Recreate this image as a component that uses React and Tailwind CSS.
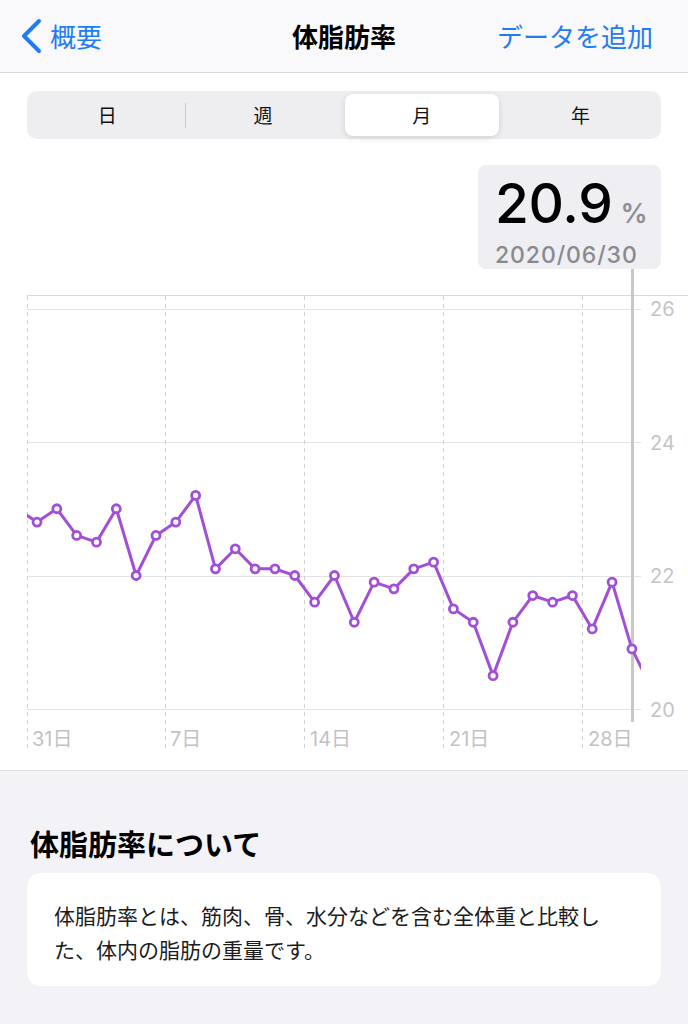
import React from 'react';

const JP = { fontFamily: '"Noto Sans CJK JP", "Noto Sans", sans-serif' };
const NUM = { fontFamily: 'Inter, "Noto Sans CJK JP", sans-serif' };

const PURPLE = '#a24fd8';

// 5/31 .. 6/30
const values = [
  22.8, 23.0, 22.6, 22.5, 23.0, 22.0, 22.6, 22.8, 23.2, 22.1, 22.4, 22.1, 22.1, 22.0, 21.6, 22.0,
  21.3, 21.9, 21.8, 22.1, 22.2, 21.5, 21.3, 20.5, 21.3, 21.7, 21.6, 21.7, 21.2, 21.9, 20.9,
];

const xAt = i => 37 + i * 19.83;
const yAt = v => 709 - (v - 20) * 66.75;

const weekLines = [27, 165, 304, 443, 582];
const dayLabels = [
  { x: 32, t: '31日' },
  { x: 170, t: '7日' },
  { x: 310, t: '14日' },
  { x: 449, t: '21日' },
  { x: 588, t: '28日' },
];

function Segments() {
  const items = ['日', '週', '月', '年'];
  return (
    <div className="mx-[27px] mt-[18px] flex h-[48px] items-stretch rounded-[10px] bg-[#eeeef0] p-[3px]">
      {items.map((t, i) => (
        <React.Fragment key={t}>
          {i > 0 && (
            <div className={`w-px self-center h-[25px] ${i === 1 ? 'bg-[#c9c9cd]' : 'bg-transparent'}`} />
          )}
          <div
            className={`flex flex-1 items-center justify-center text-[19px] text-[#111] ${
              t === '月' ? 'mx-[3px] rounded-[8px] bg-white shadow-[0_2px_6px_rgba(0,0,0,0.12)]' : ''
            }`}
            style={JP}
          >
            {t}
          </div>
        </React.Fragment>
      ))}
    </div>
  );
}

function Chart() {
  const pts = values.map((v, i) => [xAt(i), yAt(v)]);
  const path = [[17.2, yAt(23.0)], ...pts, [651.8, yAt(20.3)]].map(p => p.join(',')).join(' ');
  return (
    <svg width="688" height="501" viewBox="0 269 688 501" className="block" style={NUM}>
      <defs>
        <clipPath id="plot">
          <rect x="27" y="269" width="614" height="501" />
        </clipPath>
      </defs>
      <line x1="27" y1="295.5" x2="688" y2="295.5" stroke="#d9d9dc" />
      {[26, 24, 22, 20].map(v => (
        <line key={v} x1="27" x2="641" y1={Math.round(yAt(v)) + 0.5} y2={Math.round(yAt(v)) + 0.5} stroke="#e3e3e6" />
      ))}
      {weekLines.map(x => (
        <line key={x} x1={x + 0.5} x2={x + 0.5} y1="296" y2="752" stroke="#d0d0d3" strokeDasharray="4 4" />
      ))}
      {[26, 24, 22, 20].map(v => (
        <text key={v} x="650" y={yAt(v) + 7.5} fontSize="20" fill="#c4c4c7">
          {v}
        </text>
      ))}
      {dayLabels.map(d => (
        <text key={d.t} x={d.x} y="746" fontSize="20" fill="#c2c2c5">
          {d.t}
        </text>
      ))}
      <rect x="631" y="269" width="3" height="453" fill="#c8c8cc" />
      <g clipPath="url(#plot)">
        <polyline points={path} fill="none" stroke={PURPLE} strokeWidth="3" strokeLinejoin="round" strokeLinecap="round" />
      </g>
      {pts.map(([x, y], i) => (
        <circle key={i} cx={x} cy={y} r="4" fill="#fff" stroke={PURPLE} strokeWidth="2.8" />
      ))}
    </svg>
  );
}

export default function App() {
  return (
    <div className="flex min-h-[1024px] w-[688px] flex-col bg-white" style={JP}>
      {/* Nav bar */}
      <div className="grid h-[73px] grid-cols-[1fr_auto_1fr] items-center border-b border-[#d8d8db] bg-[#f9f9fb]">
        <div className="flex items-center gap-[8px] pl-[20px] text-[#1f7cf3]">
          <svg width="22" height="36" viewBox="0 0 22 36" fill="none">
            <polyline points="19,3 4,18 19,33" stroke="currentColor" strokeWidth="4" strokeLinecap="round" strokeLinejoin="round" />
          </svg>
          <span className="text-[26px] leading-none">概要</span>
        </div>
        <div className="text-[26px] font-bold leading-none text-black">体脂肪率</div>
        <div className="pr-[35px] text-right text-[26px] leading-none text-[#1f7cf3]">データを追加</div>
      </div>

      <Segments />

      {/* Selected value */}
      <div className="mt-[26px] flex justify-end pr-[27px]">
        <div className="h-[104px] w-[183px] rounded-[8px] bg-[#efeff3] pl-[17px] pt-[11px]" style={NUM}>
          <div className="flex items-baseline gap-[8px] leading-[54px]">
            <span className="text-[55px] font-medium tracking-[-0.3px] text-black">20.9</span>
            <span className="text-[27px] font-semibold text-[#8e8e93]">%</span>
          </div>
          <div className="text-[23px] font-medium leading-[28px] tracking-[0.9px] text-[#8a8a8e]">2020/06/30</div>
        </div>
      </div>

      <Chart />

      {/* About */}
      <div className="flex-1 border-t border-[#dedee2] bg-[#f2f2f7] px-[27px] pb-[37px] pt-[54px]">
        <h2 className="pl-[3px] text-[29px] font-bold leading-[36px] text-black">体脂肪率について</h2>
        <div className="mt-[12px] rounded-[14px] bg-white pb-[20px] pl-[27px] pr-[44px] pt-[25px] text-[21px] leading-[34px] text-[#1c1c1e]">
          体脂肪率とは、筋肉、骨、水分などを含む全体重と比較した、体内の脂肪の重量です。
        </div>
      </div>
    </div>
  );
}
